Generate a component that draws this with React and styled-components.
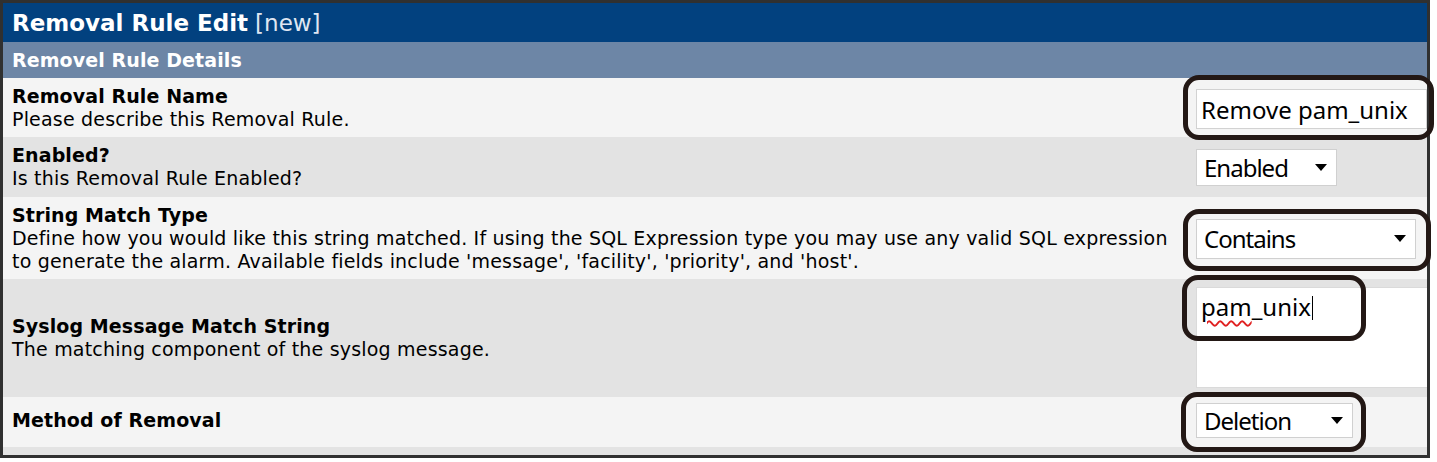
import React from 'react';
import styled, { createGlobalStyle } from 'styled-components';

const GlobalStyle = createGlobalStyle`
  body {
    margin: 0;
    background: #fff;
  }
`;

const Panel = styled.div`
  width: 1430px;
  box-sizing: border-box;
  border: 3px solid #303030;
  font-family: "DejaVu Sans", Verdana, sans-serif;
  color: #000;
`;

const TitleBar = styled.div`
  display: flex;
  align-items: center;
  height: 39px;
  padding-left: 9px;
  background: #02417f;
  color: #fff;
  font-size: 23px;
  font-weight: bold;
`;

const NewTag = styled.span`
  font-weight: normal;
  color: #dfe6f2;
  margin-left: 7px;
`;

const SectionBar = styled.div`
  display: flex;
  align-items: center;
  height: 36px;
  padding-left: 9px;
  background: #6d86a6;
  color: #fff;
  font-size: 19px;
  font-weight: bold;
  letter-spacing: 0.1px;
`;

const Row = styled.div`
  display: grid;
  grid-template-columns: 1fr 231px;
  align-items: center;
  padding: ${(p) => p.$pad || '7px 0 6px'};
  background: ${(p) => (p.$alt ? '#e3e3e3' : '#f4f4f4')};
  font-size: 19px;
  line-height: 23px;
`;

const LabelCell = styled.div`
  padding: 0 12px 0 9px;
`;

const Name = styled.div`
  font-weight: bold;
  letter-spacing: 0.1px;
`;

const Desc = styled.div`
  letter-spacing: 0.19px;
`;

const ControlCell = styled.div`
  display: flex;
  align-items: center;
`;

const Callout = styled.div`
  position: relative;
  display: inline-flex;

  &::after {
    content: '';
    position: absolute;
    top: ${(p) => p.$t}px;
    right: ${(p) => p.$r}px;
    bottom: ${(p) => p.$b}px;
    left: ${(p) => p.$l}px;
    border: 5px solid #231815;
    border-radius: 16px;
    pointer-events: none;
  }
`;

const TextInput = styled.div`
  box-sizing: border-box;
  width: 231px;
  height: 40px;
  margin-top: 2px;
  display: flex;
  align-items: center;
  padding: 0 4px;
  background: #fff;
  border: 1px solid #d2d2d2;
  font-family: "Noto Sans", "Open Sans", sans-serif;
  font-size: 24px;
`;

const Select = styled.div`
  box-sizing: border-box;
  width: ${(p) => p.$w}px;
  height: ${(p) => p.$h}px;
  display: flex;
  align-items: center;
  justify-content: space-between;
  padding: 0 9px 0 7px;
  background: #fff;
  border: 1px solid #d0d0d0;
  font-family: "Noto Sans", "Open Sans", sans-serif;
  font-size: 24px;
  letter-spacing: -1px;
`;

const Arrow = styled.span`
  width: 0;
  height: 0;
  border-left: 6px solid transparent;
  border-right: 6px solid transparent;
  border-top: 7px solid #000;
`;

const TextAreaWrap = styled.div`
  position: relative;
`;

const TextArea = styled.div`
  box-sizing: border-box;
  width: 231px;
  height: 101px;
  padding: 3px 4px;
  background: #fff;
  border: 1px solid #dadada;
  border-right: none;
  font-family: "Noto Sans", "Open Sans", sans-serif;
  font-size: 24px;
  line-height: 32px;
`;

const Misspelled = styled.span`
  text-decoration: underline wavy #e02020;
  text-decoration-thickness: 1.5px;
  text-underline-offset: 4px;
`;

const Caret = styled.span`
  display: inline-block;
  width: 1px;
  height: 24px;
  margin-left: 1px;
  vertical-align: -4px;
  background: #000;
`;

const TextCallout = styled.div`
  position: absolute;
  top: -12px;
  left: -14px;
  width: 184px;
  height: 66px;
  box-sizing: border-box;
  border: 5px solid #231815;
  border-radius: 16px;
  pointer-events: none;
`;

const Footer = styled.div`
  height: 8px;
  background: #e3e3e3;
`;

const App = () => (
  <>
    <GlobalStyle />
    <Panel>
      <TitleBar>
        Removal Rule Edit<NewTag>[new]</NewTag>
      </TitleBar>
      <SectionBar>Removel Rule Details</SectionBar>

      <Row>
        <LabelCell>
          <Name>Removal Rule Name</Name>
          <Desc>Please describe this Removal Rule.</Desc>
        </LabelCell>
        <ControlCell>
          <Callout $t={-12} $r={-7} $b={-11} $l={-13}>
            <TextInput>Remove pam_unix</TextInput>
          </Callout>
        </ControlCell>
      </Row>

      <Row $alt $pad="7px 0 7px">
        <LabelCell>
          <Name>Enabled?</Name>
          <Desc>Is this Removal Rule Enabled?</Desc>
        </LabelCell>
        <ControlCell>
          <Select $w={141} $h={37}>
            Enabled
            <Arrow />
          </Select>
        </ControlCell>
      </Row>

      <Row>
        <LabelCell>
          <Name>String Match Type</Name>
          <Desc>
            Define how you would like this string matched. If using the SQL Expression type you may use any valid
            SQL expression to generate the alarm. Available fields include 'message', 'facility', 'priority', and
            'host'.
          </Desc>
        </LabelCell>
        <ControlCell>
          <Callout $t={-10} $r={-15} $b={-12} $l={-13}>
            <Select $w={220} $h={40}>
              Contains
              <Arrow />
            </Select>
          </Callout>
        </ControlCell>
      </Row>

      <Row $alt $pad="8px 0 9px">
        <LabelCell>
          <Name>Syslog Message Match String</Name>
          <Desc>The matching component of the syslog message.</Desc>
        </LabelCell>
        <ControlCell>
          <TextAreaWrap>
            <TextArea>
              <Misspelled>pam</Misspelled>_unix<Caret />
            </TextArea>
            <TextCallout />
          </TextAreaWrap>
        </ControlCell>
      </Row>

      <Row $pad="6px 0 9px">
        <LabelCell>
          <Name>Method of Removal</Name>
        </LabelCell>
        <ControlCell>
          <Callout $t={-11} $r={-13} $b={-14} $l={-15}>
            <Select $w={157} $h={35}>
              Deletion
              <Arrow />
            </Select>
          </Callout>
        </ControlCell>
      </Row>

      <Footer />
    </Panel>
  </>
);

export default App;
